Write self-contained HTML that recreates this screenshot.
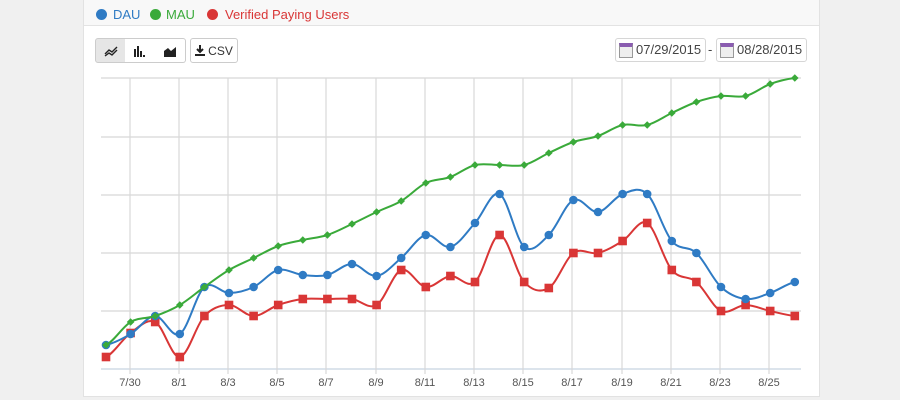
<!DOCTYPE html>
<html><head><meta charset="utf-8"><style>
*{margin:0;padding:0;box-sizing:border-box}
body{width:900px;height:400px;background:#f0f0f0;font-family:"Liberation Sans",sans-serif;position:relative;overflow:hidden}
.panel{position:absolute;left:83px;top:-2px;width:737px;height:399px;background:#fff;border:1px solid #e2e2e2}
.hdr{position:absolute;left:0;top:0;width:100%;height:27px;background:#f8f8f8;border-bottom:1px solid #e3e3e3}
.lg{position:absolute;top:7px;font-size:13px;line-height:16px}
.dot{position:absolute;width:11px;height:11px;border-radius:50%;top:9px}
.btn{position:absolute;top:38px;height:25px;border:1px solid #ccc;background:#fff;font-size:12px;color:#333;display:flex;align-items:center;justify-content:center}
.date{position:absolute;top:38px;height:24px;border:1px solid #d6d6d6;border-radius:3px;background:#fff;font-size:13px;color:#444;padding-left:20px;line-height:22px}
.cal{position:absolute;left:3px;top:4px;width:14px;height:15px;border:1px solid #999;border-top:4px solid #8a5cb0;background:#eee}
.xl{position:absolute;top:377px;font-size:11px;color:#555;width:40px;text-align:center}
</style></head><body>
<div class="panel"><div class="hdr"></div></div>
<div class="dot" style="left:96px;background:#2f7bc4"></div><div class="lg" style="left:113px;color:#2f7bc4">DAU</div>
<div class="dot" style="left:150px;background:#3aaa3a"></div><div class="lg" style="left:166px;color:#3aaa3a">MAU</div>
<div class="dot" style="left:207px;background:#d93636"></div><div class="lg" style="left:225px;color:#d93636">Verified Paying Users</div>
<div class="btn" style="left:95px;width:31px;background:#e6e6e6;border-radius:3px 0 0 3px"><svg width="14" height="12"><path d="M1 9 L5 5 L8 7 L13 2 M1 11 L5 8 L8 10 L13 5" stroke="#222" fill="none" stroke-width="1.4"/></svg></div>
<div class="btn" style="left:125px;width:31px;border-left:none"><svg width="14" height="12"><path d="M2 12V4M5 12V1M8 12V6M11 12V10" stroke="#222" stroke-width="2"/></svg></div>
<div class="btn" style="left:155px;width:31px;border-left:none;border-radius:0 3px 3px 0"><svg width="14" height="12"><path d="M1 12V6L5 3L8 6L13 2V12Z" fill="#222"/></svg></div>
<div class="btn" style="left:190px;width:48px;border-radius:3px"><svg width="10" height="11" style="margin-right:3px"><path d="M5 0V6M2 4L5 7L8 4" stroke="#222" stroke-width="2" fill="none"/><rect x="0" y="9" width="10" height="2" fill="#222"/></svg>CSV</div>
<div class="date" style="left:615px;width:91px"><span class="cal"></span>07/29/2015</div>
<div style="position:absolute;left:708px;top:42px;font-size:13px;color:#444">-</div>
<div class="date" style="left:716px;width:91px"><span class="cal"></span>08/28/2015</div>
<svg style="position:absolute;left:0;top:0" width="900" height="400" id="ch">
<g stroke="#d8d8d8" stroke-width="1.2">
<line x1="101" x2="801" y1="78" y2="78"/><line x1="101" x2="801" y1="137" y2="137"/><line x1="101" x2="801" y1="195" y2="195"/><line x1="101" x2="801" y1="253" y2="253"/><line x1="101" x2="801" y1="311" y2="311"/><line x1="101" x2="801" y1="369" y2="369" stroke="#c8d4e0"/>
<line x1="130" x2="130" y1="78" y2="374"/><line x1="179" x2="179" y1="78" y2="374"/><line x1="228" x2="228" y1="78" y2="374"/><line x1="277" x2="277" y1="78" y2="374"/><line x1="326" x2="326" y1="78" y2="374"/><line x1="376" x2="376" y1="78" y2="374"/><line x1="425" x2="425" y1="78" y2="374"/><line x1="474" x2="474" y1="78" y2="374"/><line x1="523" x2="523" y1="78" y2="374"/><line x1="572" x2="572" y1="78" y2="374"/><line x1="622" x2="622" y1="78" y2="374"/><line x1="671" x2="671" y1="78" y2="374"/><line x1="720" x2="720" y1="78" y2="374"/><line x1="769" x2="769" y1="78" y2="374"/>
</g>
<g id="series"></g>
</svg>
<div class="xl" style="left:110px">7/30</div><div class="xl" style="left:159px">8/1</div><div class="xl" style="left:208px">8/3</div><div class="xl" style="left:257px">8/5</div><div class="xl" style="left:306px">8/7</div><div class="xl" style="left:356px">8/9</div><div class="xl" style="left:405px">8/11</div><div class="xl" style="left:454px">8/13</div><div class="xl" style="left:503px">8/15</div><div class="xl" style="left:552px">8/17</div><div class="xl" style="left:602px">8/19</div><div class="xl" style="left:651px">8/21</div><div class="xl" style="left:700px">8/23</div><div class="xl" style="left:749px">8/25</div>
<script>
var M=[345,322,316,305,287,270,258,246,240,235,224,212,201,183,177,165,165,165,153,142,136,125,125,113,102,96,96,84,78];
var D=[345,334,316,334,287,293,287,270,275,275,264,276,258,235,247,223,194,247,235,200,212,194,194,241,253,287,299,293,282];
var R=[357,333,322,357,316,305,316,305,299,299,299,305,270,287,276,282,235,282,288,253,253,241,223,270,282,311,305,311,316];
var g=document.getElementById('series'),h='';
function X(i){return 106+24.6*i}
function path(a){var s='M'+X(0)+' '+a[0];for(var i=0;i<a.length-1;i++){var p0=a[Math.max(i-1,0)],p1=a[i],p2=a[i+1],p3=a[Math.min(i+2,a.length-1)];var c1=p1+(p2-p0)/6,c2=p2-(p3-p1)/6;s+=' C'+(X(i)+8.2)+' '+c1+' '+(X(i+1)-8.2)+' '+c2+' '+X(i+1)+' '+p2;}return s}
function ser(a,c,t){h+='<path d="'+path(a)+'" stroke="'+c+'" stroke-width="2" fill="none"/>';a.forEach(function(y,i){var x=X(i);if(t==0)h+='<circle cx="'+x+'" cy="'+y+'" r="4.3" fill="'+c+'"/>';else if(t==1)h+='<path d="M'+x+' '+(y-3.8)+'L'+(x+3.8)+' '+y+'L'+x+' '+(y+3.8)+'L'+(x-3.8)+' '+y+'Z" fill="'+c+'"/>';else h+='<rect x="'+(x-4.3)+'" y="'+(y-4.3)+'" width="8.6" height="8.6" fill="'+c+'"/>';});}
ser(R,'#d93636',2);ser(D,'#2f7bc4',0);ser(M,'#3aaa3a',1);
g.innerHTML=h;
</script>
</body></html>
